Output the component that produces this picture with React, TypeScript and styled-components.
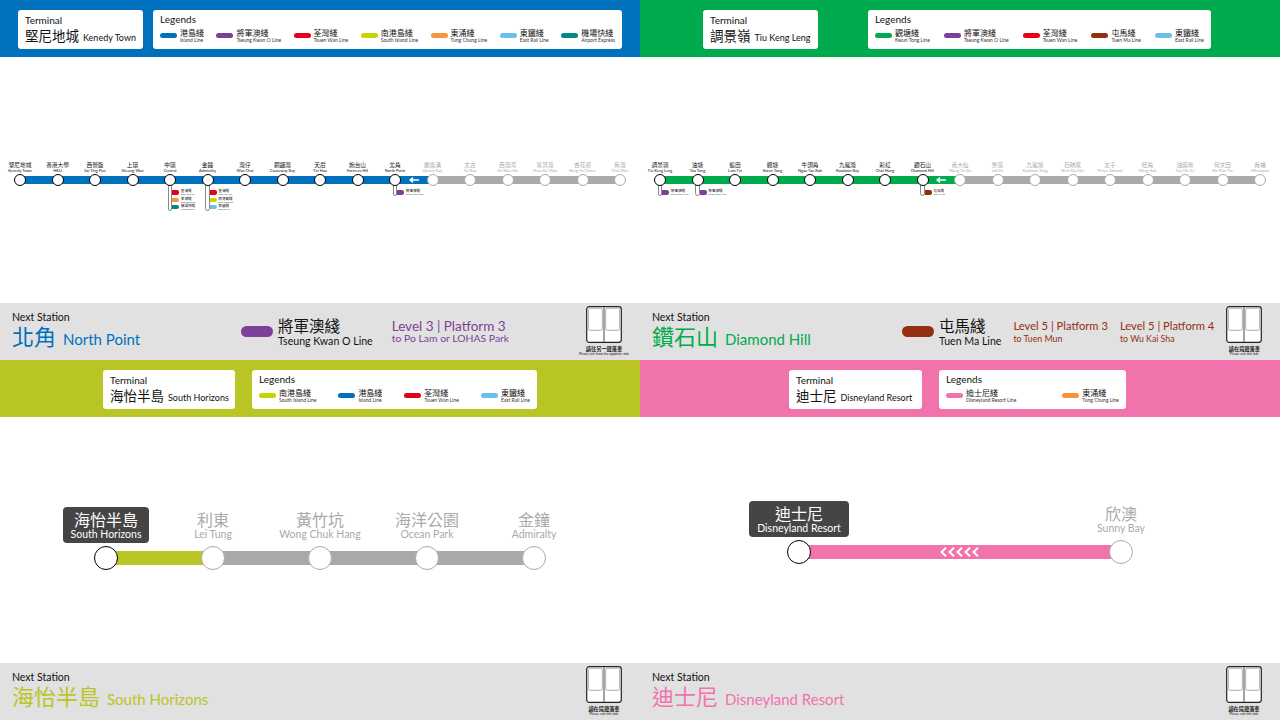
import React from 'react';
import styled, { createGlobalStyle, css } from 'styled-components';

const LINE = {
  island: '#0071bc',
  tko: '#7d3f98',
  tsuenWan: '#e2001a',
  southIsland: '#c8d400',
  tungChung: '#f7943e',
  eastRail: '#6cbfe8',
  airport: '#00888a',
  kwunTong: '#00ab4e',
  tuenMa: '#923011',
  disney: '#f173ac',
};

const GREY = '#aaaaaa';
const FONT = '"Lato", "Noto Sans CJK TC", sans-serif';

type LineInfo = { zh: string; en: string; color: string };

const L: Record<string, LineInfo> = {
  island: { zh: '港島綫', en: 'Island Line', color: LINE.island },
  tko: { zh: '將軍澳綫', en: 'Tseung Kwan O Line', color: LINE.tko },
  tsuenWan: { zh: '荃灣綫', en: 'Tsuen Wan Line', color: LINE.tsuenWan },
  southIsland: { zh: '南港島綫', en: 'South Island Line', color: LINE.southIsland },
  tungChung: { zh: '東涌綫', en: 'Tung Chung Line', color: LINE.tungChung },
  eastRail: { zh: '東鐵綫', en: 'East Rail Line', color: LINE.eastRail },
  airport: { zh: '機場快綫', en: 'Airport Express', color: LINE.airport },
  kwunTong: { zh: '觀塘綫', en: 'Kwun Tong Line', color: LINE.kwunTong },
  tuenMa: { zh: '屯馬綫', en: 'Tuen Ma Line', color: LINE.tuenMa },
  disney: { zh: '迪士尼綫', en: 'Disneyland Resort Line', color: LINE.disney },
};

type Station = { zh: string; en: string; swaps?: LineInfo[] };
type Platform = { title: string; sub: string };

type PanelData = {
  color: string;
  headerLeft: number;
  headerGap: number;
  terminal: { zh: string; en: string; width: number };
  legendWidth: number;
  legends: LineInfo[];
  variant: 'dense' | 'wide';
  railY: number;
  step: number;
  active: number;
  marker?: 'arrow' | 'chevrons';
  stations: Station[];
  next: { zh: string; en: string; width?: number };
  transfer?: { line: LineInfo; large: boolean; platforms: Platform[] };
  door: { zh: string; en: string };
};

const panels: PanelData[] = [
  {
    color: LINE.island,
    headerLeft: 18,
    headerGap: 10,
    terminal: { zh: '堅尼地城', en: 'Kenedy Town', width: 125 },
    legendWidth: 469,
    legends: [L.island, L.tko, L.tsuenWan, L.southIsland, L.tungChung, L.eastRail, L.airport],
    variant: 'dense',
    railY: 123,
    step: 37.5,
    active: 11,
    marker: 'arrow',
    stations: [
      { zh: '堅尼地城', en: 'Kenedy Town' },
      { zh: '香港大學', en: 'HKU' },
      { zh: '西營盤', en: 'Sai Ying Pun' },
      { zh: '上環', en: 'Sheung Wan' },
      { zh: '中環', en: 'Central', swaps: [L.tsuenWan, L.tungChung, L.airport] },
      { zh: '金鐘', en: 'Admiralty', swaps: [L.tsuenWan, L.southIsland, L.eastRail] },
      { zh: '灣仔', en: 'Wan Chai' },
      { zh: '銅鑼灣', en: 'Causeway Bay' },
      { zh: '天后', en: 'Tin Hau' },
      { zh: '炮台山', en: 'Fortress Hill' },
      { zh: '北角', en: 'North Point', swaps: [L.tko] },
      { zh: '鰂魚涌', en: 'Quarry Bay' },
      { zh: '太古', en: 'Tai Koo' },
      { zh: '西灣河', en: 'Sai Wan Ho' },
      { zh: '筲箕灣', en: 'Shau Kei Wan' },
      { zh: '杏花邨', en: 'Heng Fa Chuen' },
      { zh: '柴灣', en: 'Chai Wan' },
    ],
    next: { zh: '北角', en: 'North Point', width: 229 },
    transfer: {
      line: L.tko,
      large: true,
      platforms: [{ title: 'Level 3 | Platform 3', sub: 'to Po Lam or LOHAS Park' }],
    },
    door: { zh: '請往另一邊落車', en: 'Please exit from the opposite side' },
  },
  {
    color: LINE.kwunTong,
    headerLeft: 63,
    headerGap: 50,
    terminal: { zh: '調景嶺', en: 'Tiu Keng Leng', width: 115 },
    legendWidth: 343,
    legends: [L.kwunTong, L.tko, L.tsuenWan, L.tuenMa, L.eastRail],
    variant: 'dense',
    railY: 123,
    step: 37.5,
    active: 8,
    marker: 'arrow',
    stations: [
      { zh: '調景嶺', en: 'Tiu Keng Leng', swaps: [L.tko] },
      { zh: '油塘', en: 'Yau Tong', swaps: [L.tko] },
      { zh: '藍田', en: 'Lam Tin' },
      { zh: '觀塘', en: 'Kwun Tong' },
      { zh: '牛頭角', en: 'Ngau Tau Kok' },
      { zh: '九龍灣', en: 'Kowloon Bay' },
      { zh: '彩虹', en: 'Choi Hung' },
      { zh: '鑽石山', en: 'Diamond Hill', swaps: [L.tuenMa] },
      { zh: '黃大仙', en: 'Wong Tai Sin' },
      { zh: '樂富', en: 'Lok Fu' },
      { zh: '九龍塘', en: 'Kowloon Tong' },
      { zh: '石硤尾', en: 'Shek Kip Mei' },
      { zh: '太子', en: 'Prince Edward' },
      { zh: '旺角', en: 'Mong Kok' },
      { zh: '油麻地', en: 'Yau Ma Tei' },
      { zh: '何文田', en: 'Ho Man Tin' },
      { zh: '黃埔', en: 'Whampoa' },
    ],
    next: { zh: '鑽石山', en: 'Diamond Hill', width: 250 },
    transfer: {
      line: L.tuenMa,
      large: false,
      platforms: [
        { title: 'Level 5 | Platform 3', sub: 'to Tuen Mun' },
        { title: 'Level 5 | Platform 4', sub: 'to Wu Kai Sha' },
      ],
    },
    door: { zh: '請在這邊落車', en: 'Please exit this side' },
  },
  {
    color: '#b9c425',
    headerLeft: 103,
    headerGap: 17,
    terminal: { zh: '海怡半島', en: 'South Horizons', width: 132 },
    legendWidth: 285,
    legends: [L.southIsland, L.island, L.tsuenWan, L.eastRail],
    variant: 'wide',
    railY: 141,
    step: 107,
    active: 1,
    stations: [
      { zh: '海怡半島', en: 'South Horizons' },
      { zh: '利東', en: 'Lei Tung' },
      { zh: '黃竹坑', en: 'Wong Chuk Hang' },
      { zh: '海洋公園', en: 'Ocean Park' },
      { zh: '金鐘', en: 'Admiralty' },
    ],
    next: { zh: '海怡半島', en: 'South Horizons' },
    door: { zh: '請在這邊落車', en: 'Please exit this side' },
  },
  {
    color: LINE.disney,
    headerLeft: 149,
    headerGap: 17,
    terminal: { zh: '迪士尼', en: 'Disneyland Resort', width: 133 },
    legendWidth: 187,
    legends: [L.disney, L.tungChung],
    variant: 'wide',
    railY: 135,
    step: 322,
    active: 1,
    marker: 'chevrons',
    stations: [
      { zh: '迪士尼', en: 'Disneyland Resort' },
      { zh: '欣澳', en: 'Sunny Bay' },
    ],
    next: { zh: '迪士尼', en: 'Disneyland Resort' },
    door: { zh: '請在這邊落車', en: 'Please exit this side' },
  },
];

const GlobalStyle = createGlobalStyle`
  html, body {
    margin: 0;
    width: 1280px;
    height: 720px;
    overflow: hidden;
    background: #ffffff;
    font-family: ${FONT};
    color: #111111;
  }
`;

const Wall = styled.div`
  display: grid;
  grid-template-columns: repeat(2, 640px);
  grid-template-rows: repeat(2, 360px);
`;

const Panel = styled.section`
  display: flex;
  flex-direction: column;
  min-width: 0;
  overflow: hidden;
  background: #ffffff;
`;

const Header = styled.header<{ $color: string; $left: number; $gap: number }>`
  flex: 0 0 57px;
  box-sizing: border-box;
  display: flex;
  align-items: flex-start;
  gap: ${(p) => p.$gap}px;
  padding: 10px 0 0 ${(p) => p.$left}px;
  background: ${(p) => p.$color};
`;

const Card = styled.div<{ $width: number }>`
  box-sizing: border-box;
  width: ${(p) => p.$width}px;
  height: 39px;
  padding: 4px 7px;
  background: #ffffff;
  border-radius: 3px;
  white-space: nowrap;
`;

const CardTitle = styled.div`
  font-size: 10px;
  line-height: 12px;
`;

const LegendTitle = styled(CardTitle)`
  margin-top: -1px;
`;

const TerminalName = styled.div`
  display: flex;
  align-items: baseline;
  gap: 4px;
  margin-top: 1px;
  font-size: 13.5px;
  line-height: 18px;
`;

const TerminalEn = styled.span`
  font-size: 9px;
`;

const LegendRow = styled.div`
  display: flex;
  justify-content: space-between;
  margin-top: 3.5px;
`;

const LegendItem = styled.div`
  display: flex;
  align-items: center;
  gap: 3px;
`;

const LegendPill = styled.span<{ $color: string }>`
  width: 17px;
  height: 5px;
  border-radius: 3px;
  background: ${(p) => p.$color};
`;

const LegendZh = styled.div`
  font-size: 8px;
  line-height: 9px;
`;

const LegendEn = styled.div`
  font-size: 5px;
  line-height: 5px;
  color: #333333;
`;

const MapArea = styled.main`
  flex: 1;
  min-height: 0;
`;

const Route = styled.div<{ $height: number }>`
  display: flex;
  justify-content: center;
  height: ${(p) => p.$height}px;
`;

const Stop = styled.div<{ $step: number }>`
  flex: 0 0 ${(p) => p.$step}px;
  width: ${(p) => p.$step}px;
  display: flex;
  flex-direction: column;
  align-items: center;
  justify-content: flex-end;
`;

const StopLabel = styled.div<{ $wide: boolean; $active: boolean; $current: boolean }>`
  text-align: center;
  white-space: nowrap;
  color: ${(p) => (p.$current ? '#ffffff' : p.$active ? '#111111' : GREY)};
  background: ${(p) => (p.$current ? '#454545' : 'transparent')};
  ${(p) =>
    p.$wide
      ? css`
          padding: 4px 8px 3px;
          margin-bottom: 3.5px;
          border-radius: 4px;
        `
      : css`
          margin-bottom: 1.5px;
        `}
`;

const StopZh = styled.div<{ $wide: boolean }>`
  font-size: ${(p) => (p.$wide ? 16 : 5.7)}px;
  line-height: ${(p) => (p.$wide ? 18 : 6)}px;
`;

const StopEn = styled.div<{ $wide: boolean }>`
  font-size: ${(p) => (p.$wide ? 10.5 : 4)}px;
  line-height: ${(p) => (p.$wide ? 11 : 5)}px;
`;

const NodeRow = styled.div<{ $wide: boolean }>`
  position: relative;
  flex: 0 0 auto;
  width: 100%;
  height: ${(p) => (p.$wide ? 24 : 12)}px;
  display: flex;
  justify-content: center;
`;

const Rail = styled.div<{ $wide: boolean; $color: string }>`
  position: absolute;
  left: 50%;
  top: 50%;
  width: 100%;
  height: ${(p) => (p.$wide ? 14 : 8)}px;
  transform: translateY(-50%);
  display: flex;
  align-items: center;
  justify-content: center;
  background: ${(p) => p.$color};
`;

const Node = styled.div<{ $wide: boolean; $active: boolean }>`
  position: relative;
  z-index: 2;
  box-sizing: border-box;
  width: ${(p) => (p.$wide ? 24 : 12)}px;
  height: ${(p) => (p.$wide ? 24 : 12)}px;
  border-radius: 50%;
  background: #ffffff;
  border: ${(p) => (p.$wide ? 1.5 : 1)}px solid ${(p) => (p.$active ? '#000000' : GREY)};
`;

const Interchange = styled.div`
  position: absolute;
  z-index: 1;
  top: 50%;
  left: calc(50% - 2.2px);
  display: flex;
  align-items: stretch;
  white-space: nowrap;
`;

const Stem = styled.div`
  box-sizing: border-box;
  width: 4.5px;
  background: #ffffff;
  border: 0.5px solid #888888;
  border-radius: 0 0 2.5px 2.5px;
`;

const SwapList = styled.div`
  padding-top: 9px;
`;

const SwapRow = styled.div`
  display: flex;
  align-items: center;
  gap: 1.5px;
  height: 7.3px;
`;

const SwapFlag = styled.span<{ $color: string }>`
  width: 7px;
  height: 4.4px;
  border-radius: 0 2px 2px 0;
  background: ${(p) => p.$color};
`;

const SwapZh = styled.div`
  font-size: 3.6px;
  line-height: 4px;
`;

const SwapEn = styled.div`
  font-size: 2px;
  line-height: 2.4px;
  color: #444444;
`;

const Footer = styled.footer`
  flex: 0 0 57px;
  box-sizing: border-box;
  display: flex;
  align-items: center;
  padding: 0 6px 0 12px;
  background: #e1e1e1;
`;

const NextBlock = styled.div<{ $width?: number }>`
  flex: ${(p) => (p.$width ? `0 0 ${p.$width}px` : '1')};
  white-space: nowrap;
`;

const NextLabel = styled.div`
  font-size: 10.5px;
  line-height: 12px;
`;

const NextName = styled.div<{ $color: string }>`
  display: flex;
  align-items: baseline;
  gap: 7px;
  margin-top: 1px;
  font-size: 22px;
  line-height: 26px;
  color: ${(p) => p.$color};
`;

const NextEn = styled.span`
  font-size: 15px;
`;

const Transfer = styled.div`
  display: flex;
  align-items: center;
  white-space: nowrap;
`;

const TransferPill = styled.span<{ $color: string }>`
  width: 32px;
  height: 11px;
  margin-right: 5px;
  border-radius: 6px;
  background: ${(p) => p.$color};
`;

const TransferZh = styled.div`
  font-size: 15.5px;
  line-height: 18px;
`;

const TransferEn = styled.div`
  font-size: 10.6px;
  line-height: 12px;
`;

const PlatformGroup = styled.div<{ $large: boolean }>`
  display: flex;
  gap: 12px;
  margin-left: ${(p) => (p.$large ? 19 : 12)}px;
`;

const PlatformBlock = styled.div<{ $color: string }>`
  color: ${(p) => p.$color};
`;

const PlatformTitle = styled.div<{ $large: boolean }>`
  font-size: ${(p) => (p.$large ? 13.5 : 11.2)}px;
  line-height: 14px;
`;

const PlatformSub = styled.div<{ $large: boolean }>`
  font-size: ${(p) => (p.$large ? 10.4 : 8.8)}px;
  line-height: 11px;
`;

const DoorSign = styled.div`
  flex: 0 0 60px;
  align-self: flex-start;
  margin-left: auto;
  padding-top: 3px;
  display: flex;
  flex-direction: column;
  align-items: center;
  white-space: nowrap;
`;

const DoorZh = styled.div`
  margin-top: 3px;
  font-size: 5.2px;
  line-height: 6px;
  font-weight: 700;
`;

const DoorEn = styled.div`
  font-size: 3.4px;
  line-height: 4px;
`;

function DoorIcon() {
  return (
    <svg width="36" height="37" viewBox="0 0 36 37">
      <rect x="0.7" y="0.7" width="34.6" height="35.6" rx="2.5" fill="#ffffff" stroke="#222222" strokeWidth="1.2" />
      <line x1="18" y1="1" x2="18" y2="36" stroke="#8c8c8c" strokeWidth="1.6" />
      <rect x="2.3" y="2.3" width="14" height="22" rx="1.5" fill="#ffffff" stroke="#9a9a9a" strokeWidth="0.8" />
      <rect x="19.7" y="2.3" width="14" height="22" rx="1.5" fill="#ffffff" stroke="#9a9a9a" strokeWidth="0.8" />
    </svg>
  );
}

function ArrowMark() {
  return (
    <svg width="10" height="6" viewBox="0 0 10 6">
      <path d="M10 3H2M4 0.6L1 3l3 2.4" fill="none" stroke="#ffffff" strokeWidth="1.4" />
    </svg>
  );
}

function ChevronMark() {
  return (
    <svg width="40" height="10" viewBox="0 0 40 10">
      {[0, 8, 16, 24, 32].map((x) => (
        <path key={x} d={`M${x + 6} 0.8L${x + 1.5} 5l4.5 4.2`} fill="none" stroke="#ffffff" strokeWidth="2" />
      ))}
    </svg>
  );
}

function RouteMap({ data }: { data: PanelData }) {
  const wide = data.variant === 'wide';
  const nodeSize = wide ? 24 : 12;
  return (
    <Route $height={data.railY + nodeSize / 2}>
      {data.stations.map((station, i) => {
        const active = i < data.active;
        const current = wide && i === 0;
        const last = i === data.stations.length - 1;
        const showMarker = i === data.active - 1;
        return (
          <Stop key={station.en} $step={data.step}>
            <StopLabel $wide={wide} $active={active} $current={current}>
              <StopZh $wide={wide}>{station.zh}</StopZh>
              <StopEn $wide={wide}>{station.en}</StopEn>
            </StopLabel>
            <NodeRow $wide={wide}>
              {!last && (
                <Rail $wide={wide} $color={active ? data.color : GREY}>
                  {showMarker && data.marker === 'arrow' && <ArrowMark />}
                  {showMarker && data.marker === 'chevrons' && <ChevronMark />}
                </Rail>
              )}
              <Node $wide={wide} $active={active} />
              {station.swaps && (
                <Interchange>
                  <Stem />
                  <SwapList>
                    {station.swaps.map((line) => (
                      <SwapRow key={line.en}>
                        <SwapFlag $color={line.color} />
                        <div>
                          <SwapZh>{line.zh}</SwapZh>
                          <SwapEn>{line.en}</SwapEn>
                        </div>
                      </SwapRow>
                    ))}
                  </SwapList>
                </Interchange>
              )}
            </NodeRow>
          </Stop>
        );
      })}
    </Route>
  );
}

function StationPanel({ data }: { data: PanelData }) {
  return (
    <Panel>
      <Header $color={data.color} $left={data.headerLeft} $gap={data.headerGap}>
        <Card $width={data.terminal.width}>
          <CardTitle>Terminal</CardTitle>
          <TerminalName>
            {data.terminal.zh}
            <TerminalEn>{data.terminal.en}</TerminalEn>
          </TerminalName>
        </Card>
        <Card $width={data.legendWidth}>
          <LegendTitle>Legends</LegendTitle>
          <LegendRow>
            {data.legends.map((line) => (
              <LegendItem key={line.en}>
                <LegendPill $color={line.color} />
                <div>
                  <LegendZh>{line.zh}</LegendZh>
                  <LegendEn>{line.en}</LegendEn>
                </div>
              </LegendItem>
            ))}
          </LegendRow>
        </Card>
      </Header>
      <MapArea>
        <RouteMap data={data} />
      </MapArea>
      <Footer>
        <NextBlock $width={data.next.width}>
          <NextLabel>Next Station</NextLabel>
          <NextName $color={data.color}>
            {data.next.zh}
            <NextEn>{data.next.en}</NextEn>
          </NextName>
        </NextBlock>
        {data.transfer && (
          <Transfer>
            <TransferPill $color={data.transfer.line.color} />
            <div>
              <TransferZh>{data.transfer.line.zh}</TransferZh>
              <TransferEn>{data.transfer.line.en}</TransferEn>
            </div>
            <PlatformGroup $large={data.transfer.large}>
              {data.transfer.platforms.map((p) => (
                <PlatformBlock key={p.title} $color={data.transfer!.line.color}>
                  <PlatformTitle $large={data.transfer!.large}>{p.title}</PlatformTitle>
                  <PlatformSub $large={data.transfer!.large}>{p.sub}</PlatformSub>
                </PlatformBlock>
              ))}
            </PlatformGroup>
          </Transfer>
        )}
        <DoorSign>
          <DoorIcon />
          <DoorZh>{data.door.zh}</DoorZh>
          <DoorEn>{data.door.en}</DoorEn>
        </DoorSign>
      </Footer>
    </Panel>
  );
}

function App() {
  return (
    <>
      <GlobalStyle />
      <Wall>
        {panels.map((p) => (
          <StationPanel key={p.terminal.en} data={p} />
        ))}
      </Wall>
    </>
  );
}

export default App;
